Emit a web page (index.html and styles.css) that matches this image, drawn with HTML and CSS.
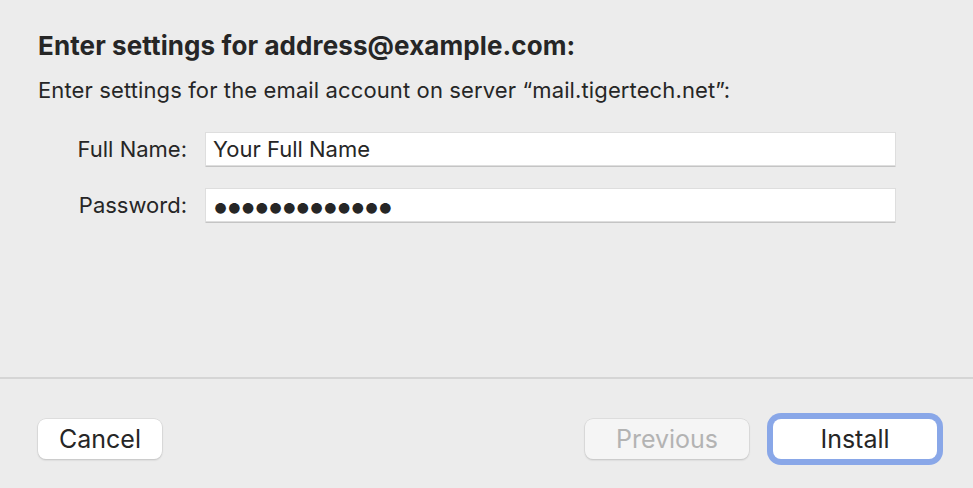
FILE: index.html
```html
<!DOCTYPE html>
<html lang="en">
<head>
    <meta charset="UTF-8">
    <meta name="viewport" content="width=device-width, initial-scale=1.0">
    <title>Account Settings</title>
    <link rel="stylesheet" href="styles.css">
</head>
<body>

    <div class="sheet">
        <!-- Settings -->
        <div class="content">
            <h2>Enter settings for address@example.com:</h2>
            <p class="intro">Enter settings for the email account on server “mail.tigertech.net”:</p>

            <form class="fields">
                <label for="full-name">Full Name:</label>
                <input type="text" id="full-name" value="Your Full Name">

                <label for="password">Password:</label>
                <input type="password" id="password" value="secretpasswd1">
            </form>
        </div>

        <!-- Buttons -->
        <div class="footer">
            <button class="btn">Cancel</button>
            <div class="footer-right">
                <button class="btn" disabled>Previous</button>
                <button class="btn btn-default">Install</button>
            </div>
        </div>
    </div>

</body>
</html>
```

FILE: styles.css
```css
body {
    margin: 0;
    background-color: #ececec;
    font-family: Inter, "Noto Sans", sans-serif;
    color: #262626;
}

.sheet {
    display: flex;
    flex-direction: column;
    height: 488px;
}

.content {
    height: 377px;
    box-sizing: border-box;
    padding: 30px 78px 0 38px;
}

.content h2 {
    margin: 0;
    font-size: 26px;
    font-weight: 700;
    line-height: 32px;
    letter-spacing: 0.1px;
}

.content .intro {
    margin: 14px 0 0;
    font-size: 22px;
    line-height: 28px;
    letter-spacing: 0.12px;
}

.fields {
    display: grid;
    grid-template-columns: 149px 1fr;
    column-gap: 19px;
    row-gap: 24px;
    align-items: center;
    margin-top: 29px;
}

.fields label {
    text-align: right;
    font-size: 22px;
}

.fields input {
    height: 32px;
    box-sizing: border-box;
    padding: 0 7px;
    font-family: inherit;
    font-size: 22px;
    color: #262626;
    background-color: #ffffff;
    border: none;
    box-shadow: 0 0 0 1px #dedede, 0 1.5px 0 0.5px #c4c4c4;
    outline: none;
}

.fields input[type="password"] {
    font-size: 34px;
    letter-spacing: -5.4px;
    padding-left: 5px;
}

.footer {
    flex: 1;
    display: flex;
    justify-content: space-between;
    align-items: center;
    padding: 11px 36px 0 38px;
    border-top: 2px solid #d5d5d5;
}

.footer-right {
    display: flex;
    gap: 24px;
}

.btn {
    height: 40px;
    min-width: 124px;
    padding: 0 20px;
    font-family: inherit;
    font-size: 25px;
    color: #262626;
    background-color: #ffffff;
    border: none;
    border-radius: 8px;
    box-shadow: 0 0 0 0.5px #d0d0d0, 0 1px 2px rgba(0, 0, 0, 0.2);
}

.btn:disabled {
    width: 164px;
    color: #b3b3b3;
    background-color: #f5f5f5;
}

.btn-default {
    width: 164px;
    box-shadow: 0 0 0 6px #89a7e8;
    border-radius: 8px;
}
```
